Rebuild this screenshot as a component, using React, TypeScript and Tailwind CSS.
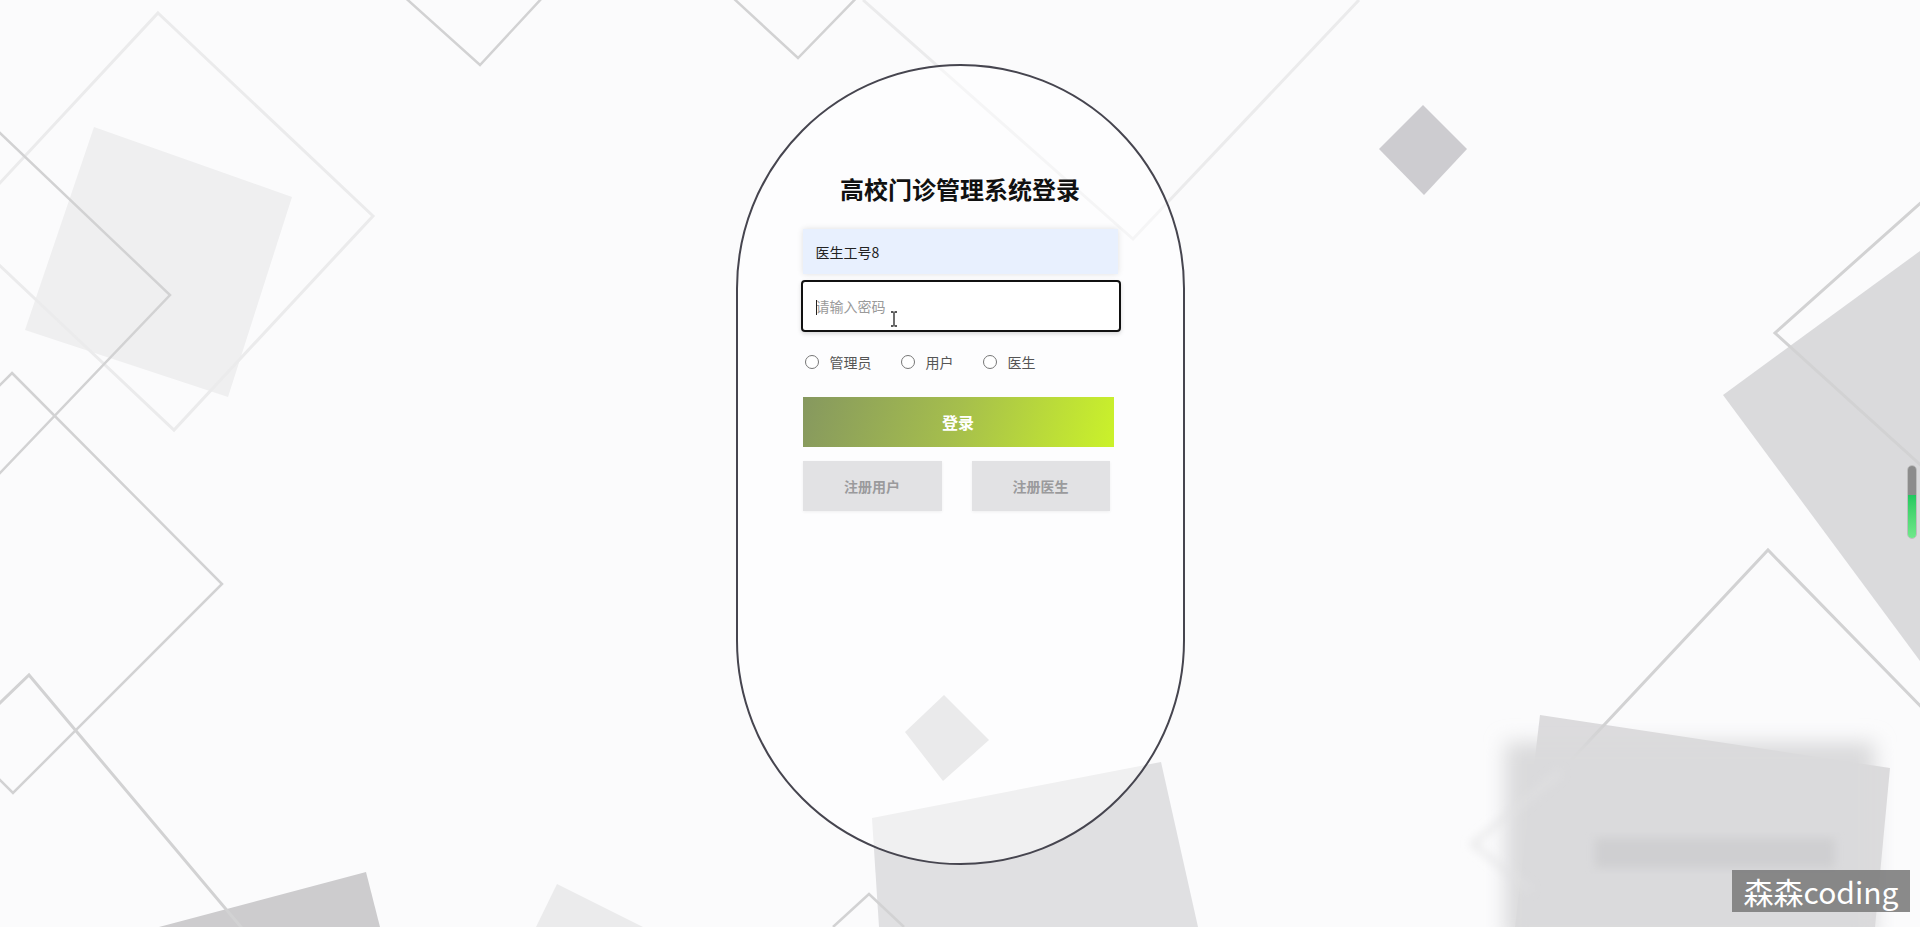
import { useState } from 'react';

const FONT = '"Noto Sans CJK SC", "Noto Sans", sans-serif';

function Backdrop() {
  const line = '#d2d2d3';
  const faint = '#ebebec';
  return (
    <svg className="absolute inset-0 w-full h-full" viewBox="0 0 1920 927" preserveAspectRatio="none">
      <defs>
        <filter id="soft" x="-20%" y="-20%" width="140%" height="140%">
          <feGaussianBlur stdDeviation="10" />
        </filter>
        <filter id="softer" x="-20%" y="-20%" width="140%" height="140%">
          <feGaussianBlur stdDeviation="5" />
        </filter>
      </defs>

      {/* filled shapes */}
      <polygon points="94,127 292,197 228,397 25,330" fill="#efeff0" />
      <polygon points="1423,105 1467,149 1424,195 1379,149" fill="#cdccd0" />
      <polygon points="1920,251 1723,395 1920,661" fill="#dadadc" />
      <polygon points="159,927 366,872 380,927" fill="#cdccce" />
      <polygon points="536,927 557,884 643,927" fill="#ebebec" />
      <polygon points="872,818 1161,762 1198,927 879,927" fill="#e0e0e2" />
      <polygon points="944,695 989,740 943,781 905,732" fill="#d4d4d6" />
      <polygon points="1540,715 1890,768 1875,927 1515,927" fill="#dcdbdd" />

      {/* faint outlines */}
      <polygon points="158,13 373,216 174,430 -41,227" fill="none" stroke={faint} strokeWidth="3" />
      <polyline points="863,0 1133,239 1359,0" fill="none" stroke={faint} strokeWidth="3" />

      {/* darker outlines */}
      <polyline points="-20,114 170,295 -20,494" fill="none" stroke={line} strokeWidth="2.5" />
      <polygon points="12,373 222,584 13,793 -197,582" fill="none" stroke={line} strokeWidth="2.5" />
      <polyline points="-20,722 29,675 262,952" fill="none" stroke={line} strokeWidth="3" />
      <polyline points="390,-16 480,65 555,-16" fill="none" stroke={line} strokeWidth="2.5" />
      <polyline points="718,-16 798,58 870,-16" fill="none" stroke={line} strokeWidth="2.5" />
      <polyline points="1935,190 1775,333 1935,478" fill="none" stroke={line} strokeWidth="3" />
      <polyline points="1560,772 1768,550 1940,726" fill="none" stroke={line} strokeWidth="3" />
      <polyline points="833,927 869,894 904,927" fill="none" stroke={line} strokeWidth="2.5" />

      {/* blurred patch, bottom right */}
      <rect x="1505" y="742" width="370" height="200" fill="#dadadc" filter="url(#soft)" />
      <rect x="1595" y="838" width="240" height="30" fill="#cfcfd1" filter="url(#softer)" />
      <polyline points="1560,772 1473,844 1530,890" fill="none" stroke="#e2e2e3" strokeWidth="4" filter="url(#softer)" />
    </svg>
  );
}

export default function App() {
  const [role, setRole] = useState('');
  const roles = ['管理员', '用户', '医生'];

  return (
    <div className="relative w-full h-[927px] overflow-hidden bg-[#fbfbfc]" style={{ fontFamily: FONT }}>
      <Backdrop />

      <div className="relative flex justify-center pt-[64px]">
        <div className="w-[449px] h-[801px] rounded-full border-[2.5px] border-[#46454f] bg-white/50 flex flex-col items-center">
          <h1 className="mt-[107px] text-[24px] leading-[32px] font-bold text-[#111]">高校门诊管理系统登录</h1>

          <div className="w-[315px] mt-[24px] flex flex-col">
            <input
              readOnly
              value="医生工号8"
              className="w-full h-[45px] px-[13px] bg-[#e8f0fe] text-[14px] text-[#222] outline-none shadow-[0_0_6px_rgba(0,0,0,0.12)]"
            />

            <div className="relative mt-[6px] -ml-[2px] w-[320px] h-[52px] rounded-[4px] border-2 border-[#111] bg-white shadow-[0_2px_4px_rgba(0,0,0,0.15)]">
              <input
                type="password"
                placeholder="请输入密码"
                className="w-full h-full px-[13px] bg-transparent text-[14px] outline-none placeholder:text-[#9a9a9a]"
              />
              <span className="absolute left-[13px] top-[18px] w-px h-[15px] bg-[#222]" />
              <svg className="absolute left-[87px] top-[29px]" width="8" height="16" viewBox="0 0 8 16">
                <path d="M1 1h2.5M4.5 1H7M4 1.5v13M1 15h2.5M4.5 15H7" stroke="#222" strokeWidth="1.3" fill="none" />
              </svg>
            </div>

            <div className="mt-[20px] h-[20px] flex items-center text-[14px] text-[#555]">
              {roles.map((r, i) => (
                <label key={r} className={`flex items-center ${i === 0 ? 'ml-[2px]' : 'ml-[29px]'}`}>
                  <input
                    type="radio"
                    name="role"
                    checked={role === r}
                    onChange={() => setRole(r)}
                    className="m-0 w-[14px] h-[14px]"
                  />
                  <span className="ml-[11px]">{r}</span>
                </label>
              ))}
            </div>

            <button className="mt-[25px] w-[311px] h-[50px] bg-linear-[105deg] from-[#86985f] via-[#a6bf4c] to-[#cbf22a] text-white text-[16px] font-bold">
              登录
            </button>

            <div className="mt-[14px] flex gap-[30px]">
              <button className="w-[139px] h-[50px] bg-[#e2e2e4] text-[#9a9a9c] text-[14px] font-bold shadow-[0_1px_3px_rgba(0,0,0,0.06)]">
                注册用户
              </button>
              <button className="w-[138px] h-[50px] bg-[#e2e2e4] text-[#9a9a9c] text-[14px] font-bold shadow-[0_1px_3px_rgba(0,0,0,0.06)]">
                注册医生
              </button>
            </div>
          </div>
        </div>
      </div>

      {/* side indicator */}
      <div className="absolute right-[3px] top-[465px] w-[10px] h-[74px] rounded-full border border-[#bdbdbd] overflow-hidden flex flex-col">
        <div className="h-[29px] bg-[#8c8c8c]" />
        <div className="flex-1 bg-linear-to-b from-[#1fc95f] to-[#6ee88a]" />
      </div>

      {/* watermark */}
      <div className="absolute left-[1732px] top-[870px] w-[178px] h-[42px] bg-[#7d7d7d]/90 flex items-center justify-center text-white text-[30px] leading-[42px]">
        森森coding
      </div>
    </div>
  );
}
